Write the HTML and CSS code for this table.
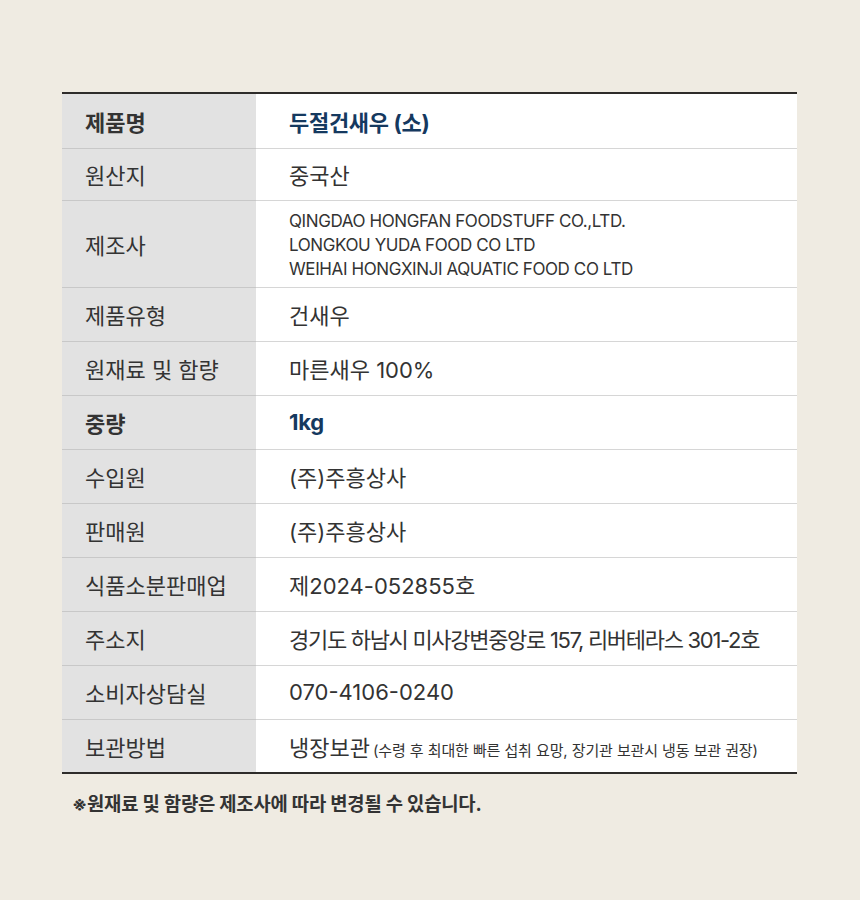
FILE: index.html
```html
<!DOCTYPE html>
<html lang="ko">
<head>
<meta charset="utf-8">
<link rel="stylesheet" href="styles.css">
</head>
<body>
<div class="page">
  <table class="info">
    <tr class="h55 strong"><th>제품명</th><td>두절건새우 (소)</td></tr>
    <tr class="h52"><th>원산지</th><td>중국산</td></tr>
    <tr class="h87"><th>제조사</th><td class="small">QINGDAO HONGFAN FOODSTUFF CO.,LTD.<br>LONGKOU YUDA FOOD CO LTD<br>WEIHAI HONGXINJI AQUATIC FOOD CO LTD</td></tr>
    <tr><th>제품유형</th><td>건새우</td></tr>
    <tr><th>원재료 및 함량</th><td>마른새우 100%</td></tr>
    <tr class="strong"><th>중량</th><td>1kg</td></tr>
    <tr><th>수입원</th><td>(주)주흥상사</td></tr>
    <tr><th>판매원</th><td>(주)주흥상사</td></tr>
    <tr><th>식품소분판매업</th><td>제2024-052855호</td></tr>
    <tr><th>주소지</th><td class="tight">경기도 하남시 미사강변중앙로 157, 리버테라스 301-2호</td></tr>
    <tr><th>소비자상담실</th><td>070-4106-0240</td></tr>
    <tr class="last"><th>보관방법</th><td>냉장보관<span class="note">(수령 후 최대한 빠른 섭취 요망, 장기관 보관시 냉동 보관 권장)</span></td></tr>
  </table>
  <p class="foot">※원재료 및 함량은 제조사에 따라 변경될 수 있습니다.</p>
</div>
</body>
</html>
```

FILE: styles.css
```css
html, body {
  margin: 0;
  padding: 0;
  background: #efebe2;
}
body {
  font-family: Inter, "Noto Sans CJK KR", sans-serif;
  color: #333;
}
.page {
  width: 860px;
  height: 900px;
  padding: 92px 63px 0 62px;
  box-sizing: border-box;
}
.info {
  width: 735px;
  border-collapse: collapse;
  border-top: 2px solid #2e2c2a;
  border-bottom: 2px solid #2e2c2a;
}
.info tr {
  height: 54px;
}
.info tr.h55 { height: 55px; }
.info tr.h52 { height: 52px; }
.info tr.h87 { height: 87px; }
.info th, .info td {
  border-bottom: 1px solid #c8c8c8;
  vertical-align: middle;
  text-align: left;
  font-size: 22px;
  letter-spacing: 0;
  color: #333;
}
.info th {
  width: 194px;
  box-sizing: border-box;
  background: #e2e2e2;
  font-weight: 400;
  padding: 0 0 0 23px;
}
.info td {
  background: #fff;
  padding: 0 0 0 33px;
  border-bottom-color: #d6d6d6;
}
.info tr.last th, .info tr.last td {
  border-bottom: none;
}
.info tr.strong th {
  font-weight: 700;
}
.info tr.strong td {
  font-weight: 700;
  color: #15395f;
  letter-spacing: -0.3px;
}
.info td.tight {
  letter-spacing: -1.3px;
}
.info td.small {
  font-size: 17px;
  line-height: 24px;
  letter-spacing: -0.4px;
  padding-top: 2px;
}
.note {
  font-size: 15px;
  letter-spacing: -0.1px;
  margin-left: 3px;
}
.foot {
  margin: 15px 0 0 10px;
  font-size: 18.8px;
  font-weight: 700;
  letter-spacing: -0.2px;
  color: #333;
}
```
